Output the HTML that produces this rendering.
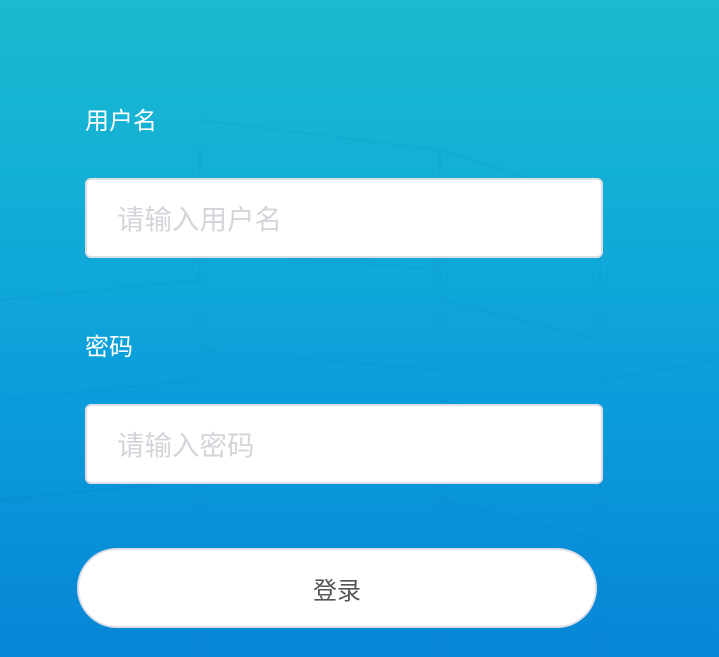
<!DOCTYPE html>
<html><head><meta charset="utf-8"><style>
html,body{margin:0;padding:0;width:719px;height:657px;overflow:hidden}
body{background:linear-gradient(180deg,#1bbad0 0%,#12aed6 30%,#0b9ddb 60%,#0785d6 100%);font-family:"Liberation Sans","Noto Sans CJK SC",sans-serif;position:relative}
.lbl{position:absolute;left:85px;color:#fff;font-size:24px;line-height:28px}
.inp{position:absolute;left:85px;width:514px;height:76px;background:#fff;border:2px solid #dcdfe6;border-radius:6px;box-sizing:content-box}
.inp span{position:absolute;left:30px;top:0;line-height:80px;font-size:27.5px;color:#d4d5da}
.btn{position:absolute;left:77px;top:548px;width:516px;height:76px;background:#fff;border:2px solid #dcdfe6;border-radius:40px;text-align:center;line-height:84px;font-size:24px;color:#555}
.bg{position:absolute;inset:0;opacity:.04}
</style></head><body>
<svg class="bg" width="719" height="657"><g stroke="#003a80" stroke-width="2" fill="none">
<path d="M200 120L440 150L440 657M200 120L200 657M440 150L600 200L600 657M0 300L200 280M0 400L200 380M0 500L200 480M200 250L440 270M200 350L440 370M200 450L440 470M200 550L440 570M440 300L600 340M440 400L600 440M440 500L600 540M600 380L719 360"/></g></svg>
<div class="lbl" style="top:108px">用户名</div>
<div class="inp" style="top:178px"><span>请输入用户名</span></div>
<div class="lbl" style="top:334px">密码</div>
<div class="inp" style="top:404px"><span>请输入密码</span></div>
<div class="btn">登录</div>
</body></html>
